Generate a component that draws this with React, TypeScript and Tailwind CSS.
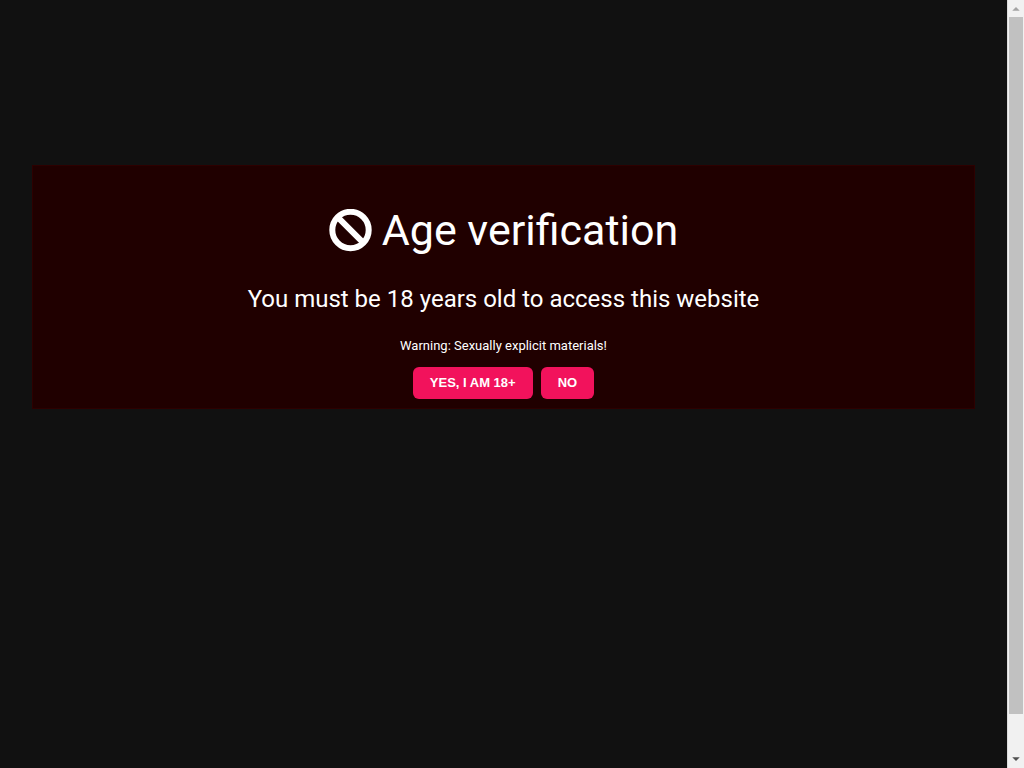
const buttonClass =
  "h-8 rounded-md bg-[#f2125c] px-[17px] font-['Liberation_Sans',sans-serif] text-[13px] font-bold text-white uppercase hover:bg-[#d40f50]";

function BanIcon() {
  return (
    <svg
      viewBox="0 0 43 43"
      className="size-[43px]"
      fill="none"
      stroke="currentColor"
      strokeWidth="6"
      aria-hidden="true"
    >
      <circle cx="21.5" cy="21" r="18.2" />
      <path d="M8.6 8.1l25.8 25.8" />
    </svg>
  );
}

function AgeGate() {
  return (
    <section className="border border-[#2d0000] bg-[#200000] px-4 pt-8 pb-[9px] text-center text-white">
      <h1 className="flex items-center justify-center gap-2.5 text-[43px] leading-16">
        <BanIcon />
        Age verification
      </h1>
      <p className="mt-5 text-2xl leading-[34px]">
        You must be 18 years old to access this website
      </p>
      <p className="mt-4 text-[13px] leading-7">
        Warning: Sexually explicit materials!
      </p>
      <div className="mt-[7px] flex justify-center gap-2">
        <button type="button" className={buttonClass}>
          Yes, I am 18+
        </button>
        <button type="button" className={buttonClass}>
          No
        </button>
      </div>
    </section>
  );
}

function ScrollRail() {
  return (
    <div
      aria-hidden="true"
      className="flex w-[17px] shrink-0 flex-col border-l border-[#dcdcdc] bg-[#f1f1f1] px-px"
    >
      <svg viewBox="0 0 15 17" className="h-[17px] w-full">
        <path d="M3.5 11 7.5 7l4 4z" fill="#a3a3a3" />
      </svg>
      <div className="flex grow flex-col">
        <div className="h-[95%] bg-[#c1c1c1]" />
      </div>
      <svg viewBox="0 0 15 17" className="h-[17px] w-full">
        <path d="M3.5 6l4 4 4-4z" fill="#505050" />
      </svg>
    </div>
  );
}

export default function App() {
  return (
    <div className="flex h-screen bg-[#111111] font-[Roboto,sans-serif]">
      <main className="min-w-0 grow px-8 pt-[165px]">
        <AgeGate />
      </main>
      <ScrollRail />
    </div>
  );
}
